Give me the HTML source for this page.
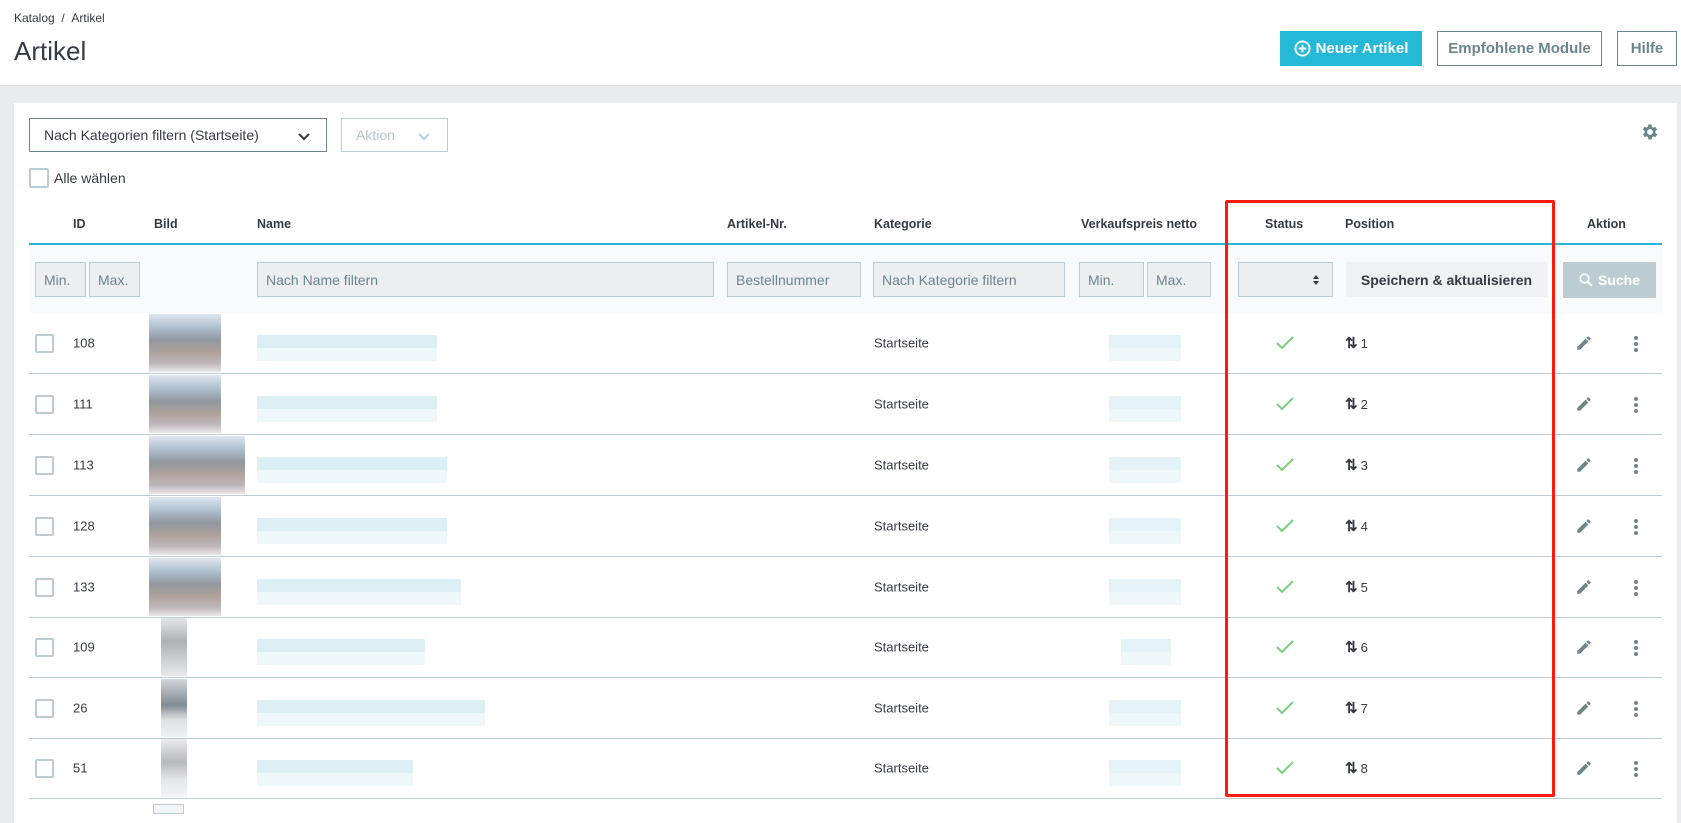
<!DOCTYPE html>
<html><head><meta charset="utf-8">
<style>
*{box-sizing:border-box;margin:0;padding:0}
body{width:1681px;height:813px;overflow:hidden;background:#eaebec;font-family:"Liberation Sans",sans-serif;color:#363a41;position:relative}
.a{position:absolute}
.hdr{left:0;top:0;width:1681px;height:86px;background:#fff;border-bottom:1px solid #dfe0e2}
.btn{position:absolute;top:31px;height:35px;font-size:15px;font-weight:bold;display:flex;align-items:center;justify-content:center}
.card{left:14px;top:103px;width:1663px;height:720px;background:#fff}
.th{position:absolute;top:217px;font-size:12.5px;font-weight:bold;color:#363a41}
.inp{position:absolute;top:262px;height:35px;background:#eceeef;border:1px solid #bbcdd2;color:#6c868e;font-size:14px;padding-left:8px;display:flex;align-items:center}
.cb{position:absolute;width:19px;height:19px;border:2px solid #bbcdd2;border-radius:2px;background:#fff}
.row{position:absolute;left:29px;width:1633px;height:61px;border-bottom:1px solid #bbcdd2}
.c{position:absolute;font-size:13px;color:#363a41;top:50%;transform:translateY(-50%)}
.img{position:absolute;left:120px;top:1px;width:72px;height:58px;background:linear-gradient(180deg,#d8e2ec 0,#a3b6c8 22%,#7d8590 45%,#a09088 65%,#b4aab0 85%,#e6e2e4 100%);opacity:.85}
.nm{position:absolute;left:228px;top:22px;width:180px;height:26px;background:linear-gradient(180deg,#dbeff5 50%,#eef8fb 50%)}
.pr{position:absolute;left:1080px;top:22px;width:72px;height:26px;background:linear-gradient(180deg,#e4f3f8 50%,#eef8fb 50%)}
.chk{position:absolute;left:1246px;top:22px}
.pos{position:absolute;left:1316px;font-size:13px}
.pos b{font-size:15px;font-weight:bold;margin-right:3px}
.ed{position:absolute;left:1546px;top:21px}
.dots{position:absolute;left:1604px;top:22px}
</style></head><body>
<div class="a hdr"></div>
<div class="a" style="left:14px;top:11px;font-size:12px;color:#363a41">Katalog&nbsp; / &nbsp;Artikel</div>
<div class="a" style="left:14px;top:36px;font-size:26px;color:#363a41">Artikel</div>
<div class="btn" style="left:1280px;width:142px;background:#25b9d7;color:#fff"><svg width="17" height="17" viewBox="0 0 18 18" style="margin-right:5px"><circle cx="9" cy="9" r="7.5" fill="none" stroke="#fff" stroke-width="2"/><path d="M9 5v8M5 9h8" stroke="#fff" stroke-width="2"/></svg>Neuer Artikel</div>
<div class="btn" style="left:1437px;width:165px;border:1px solid #6c868e;color:#6c868e;background:#fff">Empfohlene Module</div>
<div class="btn" style="left:1617px;width:60px;border:1px solid #6c868e;color:#6c868e;background:#fff">Hilfe</div>

<div class="a card"></div>
<div class="a" style="left:29px;top:118px;width:298px;height:34px;border:1px solid #6c868e;font-size:14px;color:#363a41;padding:8px 0 0 14px">Nach Kategorien filtern (Startseite)<svg class="a" style="left:267px;top:13px" width="14" height="9" viewBox="0 0 14 9"><path d="M2 2l5 5 5-5" fill="none" stroke="#363a41" stroke-width="2"/></svg></div>
<div class="a" style="left:341px;top:118px;width:107px;height:34px;border:1px solid #bbcdd2;font-size:14px;color:#b7c5ca;padding:8px 0 0 14px">Aktion<svg class="a" style="left:75px;top:13px" width="14" height="9" viewBox="0 0 14 9"><path d="M2 2l5 5 5-5" fill="none" stroke="#bbcdd2" stroke-width="2"/></svg></div>
<svg class="a" style="left:1640px;top:122px" width="20" height="20" viewBox="0 0 24 24"><path fill="#6c868e" d="M19.4 13a7.5 7.5 0 000-2l2.1-1.6-2-3.5-2.5 1a7.6 7.6 0 00-1.7-1L15 3h-4l-.4 2.7a7.6 7.6 0 00-1.7 1l-2.5-1-2 3.5L6.6 11a7.5 7.5 0 000 2l-2.1 1.6 2 3.5 2.5-1a7.6 7.6 0 001.7 1L11 21h4l.4-2.7a7.6 7.6 0 001.7-1l2.5 1 2-3.5zM13 15.5a3.5 3.5 0 110-7 3.5 3.5 0 010 7z" transform="translate(-1 0)"/></svg>
<div class="cb" style="left:29px;top:168px;width:20px;height:20px"></div>
<div class="a" style="left:54px;top:170px;font-size:14px">Alle wählen</div>

<div class="th" style="left:73px">ID</div>
<div class="th" style="left:154px">Bild</div>
<div class="th" style="left:257px">Name</div>
<div class="th" style="left:727px">Artikel-Nr.</div>
<div class="th" style="left:874px">Kategorie</div>
<div class="th" style="left:1081px">Verkaufspreis netto</div>
<div class="th" style="left:1265px">Status</div>
<div class="th" style="left:1345px">Position</div>
<div class="th" style="left:1587px">Aktion</div>
<div class="a" style="left:29px;top:243px;width:1633px;height:2px;background:#25b9d7"></div>
<div class="a" style="left:29px;top:245px;width:1633px;height:68px;background:#f8fafb"></div>
<div class="inp" style="left:35px;width:51px">Min.</div>
<div class="inp" style="left:89px;width:51px">Max.</div>
<div class="inp" style="left:257px;width:457px">Nach Name filtern</div>
<div class="inp" style="left:727px;width:134px">Bestellnummer</div>
<div class="inp" style="left:873px;width:192px">Nach Kategorie filtern</div>
<div class="inp" style="left:1079px;width:65px">Min.</div>
<div class="inp" style="left:1147px;width:64px">Max.</div>
<div class="inp" style="left:1238px;width:95px"><svg class="a" style="left:73px;top:11px" width="8" height="12" viewBox="0 0 8 12"><path d="M4 1l3 4H1zM4 11l3-4H1z" fill="#363a41"/></svg></div>
<div class="inp" style="left:1346px;width:201px;border:none;background:#eff1f2;color:#363a41;font-size:14px;font-weight:bold;justify-content:center;padding:0">Speichern &amp; aktualisieren</div>
<div class="inp" style="left:1563px;width:93px;border:none;background:#bbcdd2;color:#fff;font-weight:bold;justify-content:center;padding:0;height:36px"><svg width="14" height="14" viewBox="0 0 14 14" style="margin-right:5px"><circle cx="5.5" cy="5.5" r="4.3" fill="none" stroke="#fff" stroke-width="1.6"/><path d="M8.7 8.7L13 13" stroke="#fff" stroke-width="1.8"/></svg>Suche</div>

<div class="row" style="top:313px"><div class="cb" style="left:6px;top:21px"></div><div class="c" style="left:44px">108</div><div class="img"></div><div class="nm"></div><div class="c" style="left:845px">Startseite</div><div class="pr"></div><svg class="chk" width="20" height="16" viewBox="0 0 20 16"><path d="M2 8l5 5L18 2" fill="none" stroke="#78d07d" stroke-width="2"/></svg><div class="c pos"><b>⇅</b>1</div><svg class="ed" width="18" height="18" viewBox="0 0 24 24"><path fill="#6c868e" d="M3 17.25V21h3.75L17.8 9.94l-3.75-3.75zM20.7 7.04a1 1 0 000-1.41l-2.34-2.34a1 1 0 00-1.41 0l-1.830 1.83 3.75 3.75z"/></svg><svg class="dots" width="6" height="18" viewBox="0 0 6 18"><circle cx="3" cy="3" r="2" fill="#6c868e"/><circle cx="3" cy="9" r="2" fill="#6c868e"/><circle cx="3" cy="15" r="2" fill="#6c868e"/></svg></div>
<div class="row" style="top:374px"><div class="cb" style="left:6px;top:21px"></div><div class="c" style="left:44px">111</div><div class="img"></div><div class="nm"></div><div class="c" style="left:845px">Startseite</div><div class="pr"></div><svg class="chk" width="20" height="16" viewBox="0 0 20 16"><path d="M2 8l5 5L18 2" fill="none" stroke="#78d07d" stroke-width="2"/></svg><div class="c pos"><b>⇅</b>2</div><svg class="ed" width="18" height="18" viewBox="0 0 24 24"><path fill="#6c868e" d="M3 17.25V21h3.75L17.8 9.940l-3.75-3.75zM20.7 7.04a1 1 0 000-1.41l-2.34-2.34a1 1 0 00-1.41 0l-1.83 1.83 3.75 3.75z"/></svg><svg class="dots" width="6" height="18" viewBox="0 0 6 18"><circle cx="3" cy="3" r="2" fill="#6c868e"/><circle cx="3" cy="9" r="2" fill="#6c868e"/><circle cx="3" cy="15" r="2" fill="#6c868e"/></svg></div>
<div class="row" style="top:435px"><div class="cb" style="left:6px;top:21px"></div><div class="c" style="left:44px">113</div><div class="img" style="width:96px"></div><div class="nm" style="width:190px"></div><div class="c" style="left:845px">Startseite</div><div class="pr"></div><svg class="chk" width="20" height="16" viewBox="0 0 20 16"><path d="M2 8l5 5L18 2" fill="none" stroke="#78d07d" stroke-width="2"/></svg><div class="c pos"><b>⇅</b>3</div><svg class="ed" width="18" height="18" viewBox="0 0 24 24"><path fill="#6c868e" d="M3 17.25V21h3.75L17.8 9.94l-3.75-3.75zM20.7 7.04a1 1 0 000-1.41l-2.34-2.34a1 1 0 00-1.41 0l-1.83 1.83 3.75 3.75z"/></svg><svg class="dots" width="6" height="18" viewBox="0 0 6 18"><circle cx="3" cy="3" r="2" fill="#6c868e"/><circle cx="3" cy="9" r="2" fill="#6c868e"/><circle cx="3" cy="15" r="2" fill="#6c868e"/></svg></div>
<div class="row" style="top:496px"><div class="cb" style="left:6px;top:21px"></div><div class="c" style="left:44px">128</div><div class="img"></div><div class="nm" style="width:190px"></div><div class="c" style="left:845px">Startseite</div><div class="pr"></div><svg class="chk" width="20" height="16" viewBox="0 0 20 16"><path d="M2 8l5 5L18 2" fill="none" stroke="#78d07d" stroke-width="2"/></svg><div class="c pos"><b>⇅</b>4</div><svg class="ed" width="18" height="18" viewBox="0 0 24 24"><path fill="#6c868e" d="M3 17.25V21h3.75L17.8 9.94l-3.75-3.75zM20.7 7.04a1 1 0 000-1.41l-2.34-2.34a1 1 0 00-1.41 0l-1.83 1.83 3.75 3.75z"/></svg><svg class="dots" width="6" height="18" viewBox="0 0 6 18"><circle cx="3" cy="3" r="2" fill="#6c868e"/><circle cx="3" cy="9" r="2" fill="#6c868e"/><circle cx="3" cy="15" r="2" fill="#6c868e"/></svg></div>
<div class="row" style="top:557px"><div class="cb" style="left:6px;top:21px"></div><div class="c" style="left:44px">133</div><div class="img"></div><div class="nm" style="width:204px"></div><div class="c" style="left:845px">Startseite</div><div class="pr"></div><svg class="chk" width="20" height="16" viewBox="0 0 20 16"><path d="M2 8l5 5L18 2" fill="none" stroke="#78d07d" stroke-width="2"/></svg><div class="c pos"><b>⇅</b>5</div><svg class="ed" width="18" height="18" viewBox="0 0 24 24"><path fill="#6c868e" d="M3 17.25V21h3.75L17.8 9.94l-3.75-3.75zM20.7 7.04a1 1 0 000-1.41l-2.34-2.34a1 1 0 00-1.41 0l-1.83 1.83 3.75 3.75z"/></svg><svg class="dots" width="6" height="18" viewBox="0 0 6 18"><circle cx="3" cy="3" r="2" fill="#6c868e"/><circle cx="3" cy="9" r="2" fill="#6c868e"/><circle cx="3" cy="15" r="2" fill="#6c868e"/></svg></div>
<div class="row" style="top:617px"><div class="cb" style="left:6px;top:21px"></div><div class="c" style="left:44px">109</div><div class="img" style="left:132px;width:26px;background:linear-gradient(#dfe2e4,#a0a3a6 40%,#e2e4e6)"></div><div class="nm" style="width:168px"></div><div class="c" style="left:845px">Startseite</div><div class="pr" style="left:1092px;width:50px"></div><svg class="chk" width="20" height="16" viewBox="0 0 20 16"><path d="M2 8l5 5L18 2" fill="none" stroke="#78d07d" stroke-width="2"/></svg><div class="c pos"><b>⇅</b>6</div><svg class="ed" width="18" height="18" viewBox="0 0 24 24"><path fill="#6c868e" d="M3 17.25V21h3.75L17.8 9.94l-3.75-3.75zM20.7 7.04a1 1 0 000-1.41l-2.34-2.34a1 1 0 00-1.41 0l-1.83 1.83 3.75 3.75z"/></svg><svg class="dots" width="6" height="18" viewBox="0 0 6 18"><circle cx="3" cy="3" r="2" fill="#6c868e"/><circle cx="3" cy="9" r="2" fill="#6c868e"/><circle cx="3" cy="15" r="2" fill="#6c868e"/></svg></div>
<div class="row" style="top:678px"><div class="cb" style="left:6px;top:21px"></div><div class="c" style="left:44px">26</div><div class="img" style="left:132px;width:26px;background:linear-gradient(#c8ced2,#6c7680 45%,#d6dadd 70%,#eceef0)"></div><div class="nm" style="width:228px"></div><div class="c" style="left:845px">Startseite</div><div class="pr"></div><svg class="chk" width="20" height="16" viewBox="0 0 20 16"><path d="M2 8l5 5L18 2" fill="none" stroke="#78d07d" stroke-width="2"/></svg><div class="c pos"><b>⇅</b>7</div><svg class="ed" width="18" height="18" viewBox="0 0 24 24"><path fill="#6c868e" d="M3 17.25V21h3.75L17.8 9.94l-3.75-3.75zM20.7 7.04a1 1 0 000-1.41l-2.34-2.34a1 1 0 00-1.41 0l-1.83 1.83 3.75 3.75z"/></svg><svg class="dots" width="6" height="18" viewBox="0 0 6 18"><circle cx="3" cy="3" r="2" fill="#6c868e"/><circle cx="3" cy="9" r="2" fill="#6c868e"/><circle cx="3" cy="15" r="2" fill="#6c868e"/></svg></div>
<div class="row" style="top:738px"><div class="cb" style="left:6px;top:21px"></div><div class="c" style="left:44px">51</div><div class="img" style="left:132px;width:26px;background:linear-gradient(#e6e8ea,#a8aeb2 40%,#e0e2e4 70%,#f0f1f2)"></div><div class="nm" style="width:156px"></div><div class="c" style="left:845px">Startseite</div><div class="pr"></div><svg class="chk" width="20" height="16" viewBox="0 0 20 16"><path d="M2 8l5 5L18 2" fill="none" stroke="#78d07d" stroke-width="2"/></svg><div class="c pos"><b>⇅</b>8</div><svg class="ed" width="18" height="18" viewBox="0 0 24 24"><path fill="#6c868e" d="M3 17.25V21h3.75L17.8 9.94l-3.75-3.75zM20.7 7.04a1 1 0 000-1.41l-2.34-2.34a1 1 0 00-1.41 0l-1.83 1.83 3.75 3.75z"/></svg><svg class="dots" width="6" height="18" viewBox="0 0 6 18"><circle cx="3" cy="3" r="2" fill="#6c868e"/><circle cx="3" cy="9" r="2" fill="#6c868e"/><circle cx="3" cy="15" r="2" fill="#6c868e"/></svg></div>
<div class="a" style="left:153px;top:804px;width:31px;height:10px;border:1px solid #bbcdd2;background:#f4f5f6"></div>

<div class="a" style="left:1225px;top:200px;width:330px;height:597px;border:3px solid #ff1a10;border-radius:2px"></div>
</body></html>
